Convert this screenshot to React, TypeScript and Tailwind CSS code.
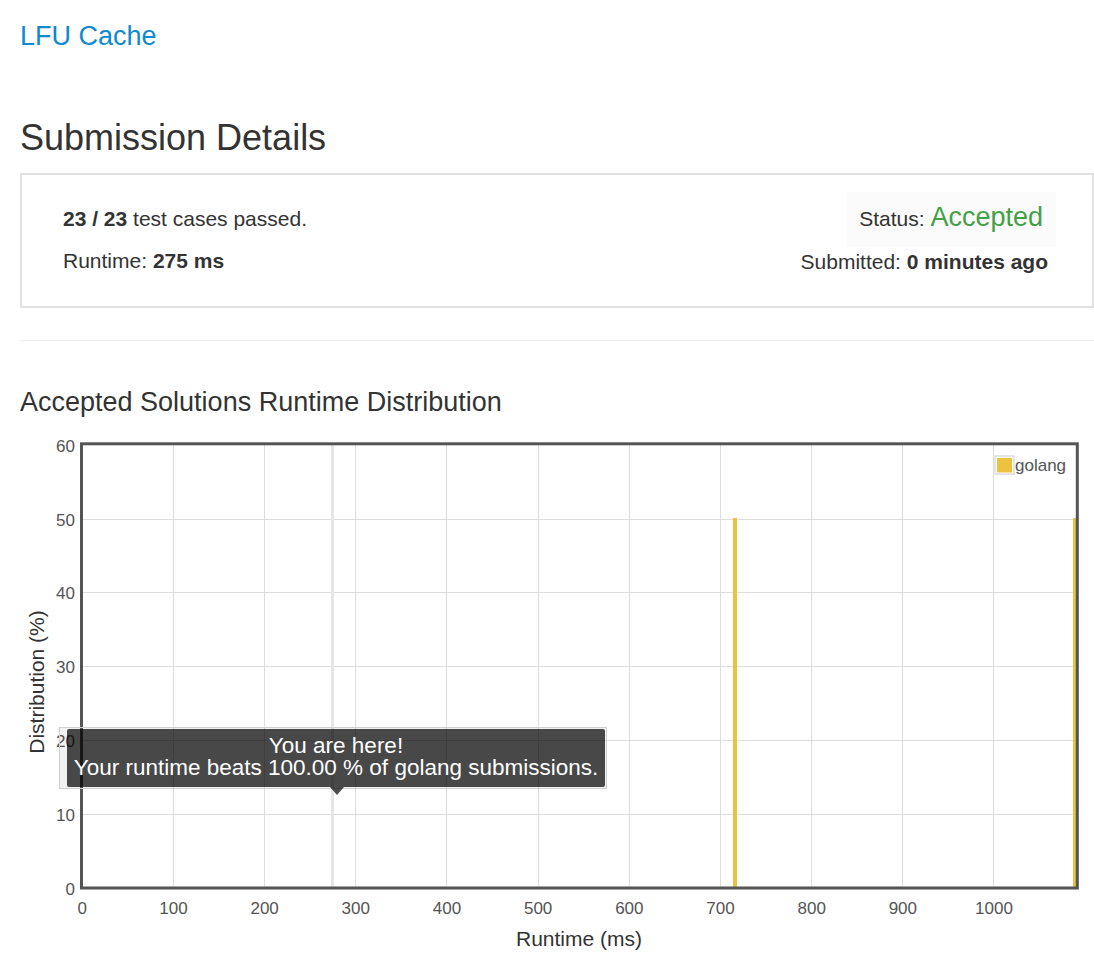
import React from "react";

const X = (v: number) => 82.3 + v * 0.9117;
const Y = (v: number) => 888 - v * 7.38;
const crisp = (n: number) => Math.floor(n) + 0.5;

function Chart() {
  const xTicks = [0, 100, 200, 300, 400, 500, 600, 700, 800, 900, 1000];
  const yTicks = [0, 10, 20, 30, 40, 50, 60];
  return (
    <div className="relative mt-[3px] h-[540px] w-[1074px]">
      <svg width={1074} height={540} viewBox="0 0 1074 540" className="block overflow-visible">
        <g transform="translate(-20,-420)" fontFamily="'Liberation Sans', Arial, sans-serif">
          {yTicks.slice(1, 6).map((v) => (
            <line key={"h" + v} x1={82} x2={1076} y1={crisp(Y(v))} y2={crisp(Y(v))} stroke="#dddddd" strokeWidth={1} />
          ))}
          {xTicks.slice(1).map((v) => (
            <line key={"v" + v} x1={crisp(X(v))} x2={crisp(X(v))} y1={445} y2={887} stroke="#dddddd" strokeWidth={1} />
          ))}
          <rect x={331} y={445} width={3} height={442} fill="#e6e6e6" />
          <rect x={733} y={518} width={4} height={370} fill="#edc240" />
          <rect x={1073} y={518} width={4} height={370} fill="#edc240" />
          <rect x={81.5} y={443.8} width={995.8} height={444.2} fill="none" stroke="#545454" strokeWidth={3} />
          <rect x={995} y={456} width={19} height={18} fill="#ffffff" stroke="#cccccc" strokeWidth={1} />
          <rect x={997} y={458} width={15} height={14.5} fill="#edc240" />
          <text x={1015} y={471} fontSize={17} fill="#545454">golang</text>
          {yTicks.map((v) => (
            <text key={"yl" + v} x={75} y={Y(v) + 6.5} fontSize={17} fill="#545454" textAnchor="end">
              {v}
            </text>
          ))}
          {xTicks.map((v) => (
            <text key={"xl" + v} x={X(v)} y={914} fontSize={17} fill="#545454" textAnchor="middle">
              {v}
            </text>
          ))}
          <text x={579} y={945.5} fontSize={21} fill="#333333" textAnchor="middle">
            Runtime (ms)
          </text>
          <text
            x={0}
            y={0}
            fontSize={21}
            fill="#333333"
            textAnchor="middle"
            transform="translate(44,682) rotate(-90)"
          >
            Distribution (%)
          </text>
        </g>
      </svg>
      <div className="absolute left-[39px] top-[307px] h-[62px] w-[548px] border border-[#d0d0d0] bg-[rgba(0,0,0,0.05)]" />
      <div className="absolute left-[47px] top-[309px] flex h-[58px] w-[538px] flex-col items-center rounded-[2px] bg-[rgba(0,0,0,0.7)] pt-[6px] text-[22.5px] leading-[22px] text-white [font-family:'Liberation_Sans',Arial,sans-serif]">
        <div>You are here!</div>
        <div>Your runtime beats 100.00 % of golang submissions.</div>
      </div>
      <div className="absolute left-[310px] top-[367px] h-0 w-0 border-l-[7px] border-r-[7px] border-t-[8px] border-l-transparent border-r-transparent border-t-[rgba(0,0,0,0.7)]" />
    </div>
  );
}

export default function App() {
  return (
    <div className="min-h-[960px] w-[1094px] overflow-hidden bg-white pl-[20px] text-[#333333] [font-family:'Liberation_Sans',Arial,sans-serif]">
      <div className="pt-[21px] text-[27px] leading-[30px] text-[#0f8ad0]">LFU Cache</div>
      <h1 className="mt-[67px] text-[36px] leading-[40px] font-normal">Submission Details</h1>
      <div className="mt-[15px] flex h-[135px] w-[1074px] justify-between border-2 border-[#e2e2e2]">
        <div className="pl-[41px] pt-[32px] text-[21px] leading-[24px]">
          <div>
            <b>23 / 23</b> test cases passed.
          </div>
          <div className="mt-[18px]">
            Runtime: <b>275 ms</b>
          </div>
        </div>
        <div className="flex flex-col items-end pr-[36px] pt-[17px]">
          <div className="flex h-[55px] items-baseline bg-[#fbfbfb] pl-[12px] pr-[13px] pt-[10px]">
            <span className="text-[21px] leading-[24px]">Status:&nbsp;</span>
            <span className="text-[27px] leading-[30px] text-[#43a047]">Accepted</span>
          </div>
          <div className="mt-[3px] pr-[8px] text-[21px] leading-[24px]">
            Submitted: <b>0 minutes ago</b>
          </div>
        </div>
      </div>
      <div className="mt-[32px] h-px w-[1074px] bg-[#eeeeee]" />
      <h3 className="mt-[46px] text-[27px] leading-[30px] font-normal">Accepted Solutions Runtime Distribution</h3>
      <Chart />
    </div>
  );
}
